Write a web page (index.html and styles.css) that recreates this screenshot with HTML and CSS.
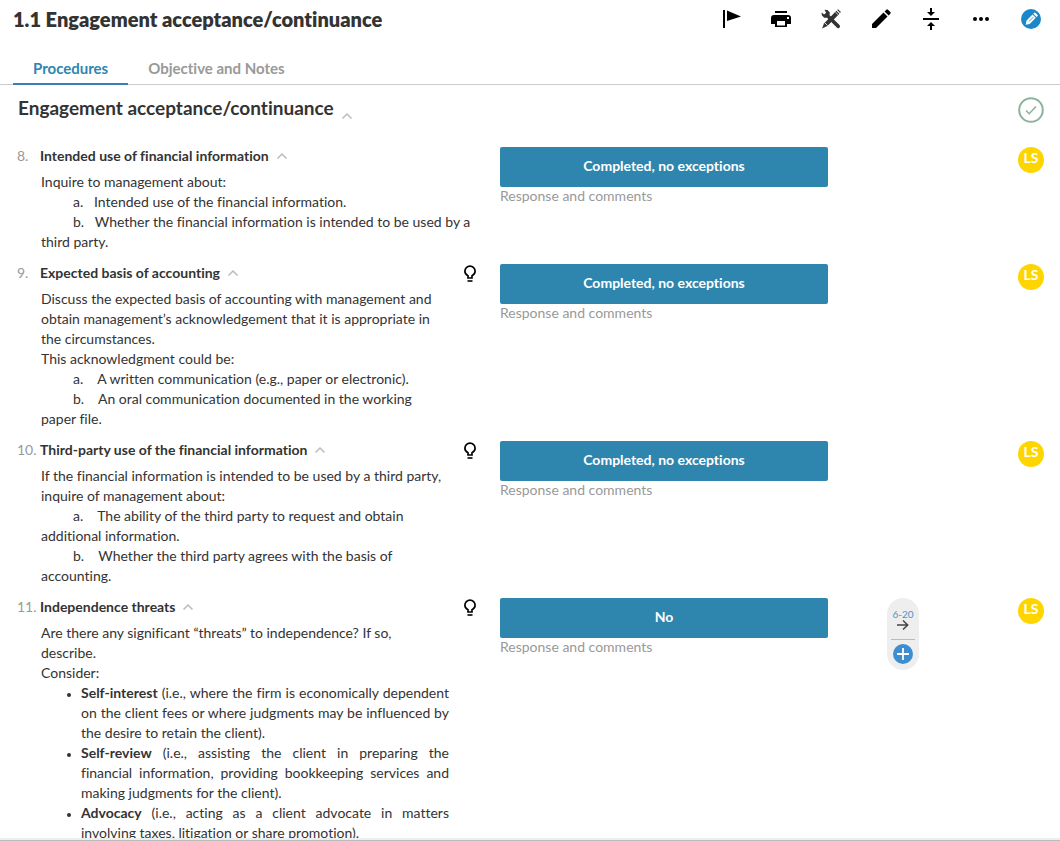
FILE: index.html
```html
<!DOCTYPE html>
<html lang="en">
<head>
<meta charset="utf-8">
<title>1.1 Engagement acceptance/continuance</title>
<link rel="stylesheet" href="styles.css">
</head>
<body>
<svg class="sprite" aria-hidden="true">
  <symbol id="chevron" viewBox="0 0 12 8"><path d="M1.500 6.500 6 2l4.500 4.500" fill="none" stroke="currentColor" stroke-width="1.500"/></symbol>
  <symbol id="bulb" viewBox="0 0 14 18"><path d="M5 13v-2.300C3 9.800 1.900 8.300 1.900 6.300a5.100 5.100 0 0 1 10.200 0c0 2-1.100 3.500-3.100 4.400V13z" fill="none" stroke="currentColor" stroke-width="1.700"/><path d="M4.500 15.200h5v1.600h-5z" fill="currentColor"/></symbol>
</svg>
<div class="app">
  <header class="topbar">
    <h1 class="title">1.1 Engagement acceptance/continuance</h1>
    <div class="tools">
      <button class="tool" aria-label="Flag"><svg viewBox="0 0 20 20"><path d="M2 1h2v18H2z M6 1.500 20 7.500 6 12z"/></svg></button>
      <button class="tool" aria-label="Print"><svg viewBox="0 0 20 20"><path d="M4 2h12v2H4z"/><path fill-rule="evenodd" d="M3 6h14a3 3 0 0 1 3 3v6h-4v3H4v-3H0V9a3 3 0 0 1 3-3zm3 6v4.500h8V12zM16 8v2h2V8z"/></svg></button>
      <button class="tool tool-soft" aria-label="Tools"><svg viewBox="0 0 20 20"><path d="m3.500.8 3 .2 2.300 2.500-.2 2.700 9.900 9.800a1.800 1.800 0 0 1-2.700 2.600L6 8.800l-2.800-.1L.8 6.300.6 3.600l2.500 2 2-1.800z"/><path d="m15.400 1.800 3 2.900-12 12.200L1 19.400l2-5z"/><path d="m16.200.9.8-.7L19.900 3l-.8.900z"/><path d="m3.800 13.800 2.800 2.700M14.300 3l2.900 2.800" stroke="#fff" stroke-width=".8"/></svg></button>
      <button class="tool" aria-label="Edit"><svg viewBox="0 0 20 20"><path d="M1 15 12.500 3.500l4 4L5 19H1zM13.600 2.400l1.700-1.700a1.200 1.200 0 0 1 1.700 0L19.300 3a1.200 1.200 0 0 1 0 1.700l-1.700 1.700z"/></svg></button>
      <button class="tool" aria-label="Collapse all"><svg viewBox="0 0 16 22"><path d="M0 10h16v2H0zM7 0h2v4h3l-4 4-4-4h3zM7 22h2v-4h3l-4-4-4 4h3z"/></svg></button>
      <button class="tool" aria-label="More"><svg viewBox="0 0 20 20"><circle cx="4" cy="10" r="2"/><circle cx="10" cy="10" r="2"/><circle cx="16" cy="10" r="2"/></svg></button>
      <button class="tool" aria-label="Edit mode"><svg viewBox="0 0 20 20"><circle cx="10" cy="10" r="10" fill="#1a87c9"/><path d="m4.700 15.700.7-4 6.100-6.200 3.300 3.300-6.100 6.200zM12.300 4.700l1-1c.3-.3.700-.3 1 0l2.300 2.300c.3.300.3.700 0 1l-1 1z" fill="#fff"/><path d="m8 12.400 4.300-4.300" stroke="#1a87c9" stroke-width=".8"/></svg></button>
    </div>
  </header>

  <nav class="tabs">
    <a class="tab tab-active" href="#procedures" aria-current="page">Procedures</a>
    <a class="tab" href="#notes">Objective and Notes</a>
  </nav>

  <main class="content" id="procedures">
    <div class="section-head">
      <h2 class="section-title">Engagement acceptance/continuance</h2>
      <button class="toggle toggle-low" aria-label="Collapse section"><svg><use href="#chevron"/></svg></button>
      <button class="signoff" aria-label="Sign off"><svg viewBox="0 0 26 26" fill="none" stroke="#8bb39b"><circle cx="13" cy="13" r="11.800" stroke-width="2"/><path d="m8 13.500 3.200 3.200L18 9.500" stroke-width="1.600"/></svg></button>
    </div>

    <article class="row">
      <span class="number">8.</span>
      <div class="question">
        <div class="question-head"><h3 class="question-title">Intended use of financial information</h3><button class="toggle" aria-label="Collapse"><svg><use href="#chevron"/></svg></button></div>
        <div class="text">
          <p>Inquire to management about:</p>
          <p class="step">a.&nbsp;&nbsp; Intended use of the financial information.</p>
          <p class="step">b.&nbsp;&nbsp; Whether the financial information is intended to be used by a third party.</p>
        </div>
      </div>
      <div class="response"><button class="answer">Completed, no exceptions</button><input class="comment" type="text" placeholder="Response and comments" aria-label="Response and comments"></div>
      <div class="side"><span class="avatar">LS</span></div>
    </article>

    <article class="row">
      <span class="number">9.</span>
      <div class="question has-hint">
        <div class="question-head"><h3 class="question-title">Expected basis of accounting</h3><button class="toggle" aria-label="Collapse"><svg><use href="#chevron"/></svg></button></div>
        <button class="hint" aria-label="Guidance"><svg><use href="#bulb"/></svg></button>
        <div class="text">
          <p>Discuss the expected basis of accounting with management and obtain management’s acknowledgement that it is appropriate in the circumstances.</p>
          <p>This acknowledgment could be:</p>
          <p class="step">a.&nbsp;&nbsp;&nbsp; A written communication (e.g., paper or electronic).</p>
          <p class="step">b.&nbsp;&nbsp;&nbsp; An oral communication documented in the working paper file.</p>
        </div>
      </div>
      <div class="response"><button class="answer">Completed, no exceptions</button><input class="comment" type="text" placeholder="Response and comments" aria-label="Response and comments"></div>
      <div class="side"><span class="avatar">LS</span></div>
    </article>

    <article class="row">
      <span class="number">10.</span>
      <div class="question has-hint">
        <div class="question-head"><h3 class="question-title">Third-party use of the financial information</h3><button class="toggle" aria-label="Collapse"><svg><use href="#chevron"/></svg></button></div>
        <button class="hint" aria-label="Guidance"><svg><use href="#bulb"/></svg></button>
        <div class="text">
          <p>If the financial information is intended to be used by a third party, inquire of management about:</p>
          <p class="step">a.&nbsp;&nbsp;&nbsp; The ability of the third party to request and obtain additional information.</p>
          <p class="step">b.&nbsp;&nbsp;&nbsp; Whether the third party agrees with the basis of accounting.</p>
        </div>
      </div>
      <div class="response"><button class="answer">Completed, no exceptions</button><input class="comment" type="text" placeholder="Response and comments" aria-label="Response and comments"></div>
      <div class="side"><span class="avatar">LS</span></div>
    </article>

    <article class="row">
      <span class="number">11.</span>
      <div class="question has-hint">
        <div class="question-head"><h3 class="question-title">Independence threats</h3><button class="toggle" aria-label="Collapse"><svg><use href="#chevron"/></svg></button></div>
        <button class="hint" aria-label="Guidance"><svg><use href="#bulb"/></svg></button>
        <div class="text">
          <p>Are there any significant “threats” to independence? If so, describe.</p>
          <p>Consider:</p>
          <ul class="threats">
            <li><strong>Self-interest</strong> (i.e., where the firm is economically dependent on the client fees or where judgments may be influenced by the desire to retain the client).</li>
            <li><strong>Self-review</strong> (i.e., assisting the client in preparing the financial information, providing bookkeeping services and making judgments for the client).</li>
            <li><strong>Advocacy</strong> (i.e., acting as a client advocate in matters involving taxes, litigation or share promotion).</li>
          </ul>
        </div>
      </div>
      <div class="response"><button class="answer">No</button><input class="comment" type="text" placeholder="Response and comments" aria-label="Response and comments"></div>
      <div class="side">
        <div class="refs">
          <a class="ref" href="#6-20">6-20<svg viewBox="0 0 12 12"><path d="M0 6h10.500M6 1.500 10.700 6 6 10.500" fill="none" stroke="#444" stroke-width="1.500"/></svg></a>
          <button class="add" aria-label="Add reference"><svg viewBox="0 0 20 20"><circle cx="10" cy="10" r="10" fill="#3d8ed0"/><path d="M10 4v12M4 10h12" stroke="#fff" stroke-width="1.800"/></svg></button>
        </div>
        <span class="avatar">LS</span>
      </div>
    </article>
  </main>
</div>
</body>
</html>
```

FILE: styles.css
```css
* { box-sizing: border-box; }

body {
  margin: 0;
  background: #fff;
  color: #333;
  font: 14px/20px Lato, "Open Sans", sans-serif;
  font-variant-ligatures: none;
}

h1, h2, h3, p, ul { margin: 0; }

button {
  padding: 0;
  border: 0;
  background: none;
  color: inherit;
  font: inherit;
  cursor: pointer;
}

svg { display: block; }

.sprite { display: none; }

.app {
  display: flex;
  flex-direction: column;
  height: 100vh;
  border-bottom: 1px solid #bbb;
}

.app::after {
  content: "";
  flex: none;
  height: 2px;
  background: #eee;
}

.topbar {
  display: flex;
  flex: none;
  align-items: center;
  justify-content: space-between;
  height: 38px;
  padding: 0 19px 0 13px;
}

.title {
  font-size: 20px;
  font-weight: 800;
  line-height: 38px;
}

.tools {
  display: flex;
  gap: 30px;
  color: #000;
}

.tool svg {
  width: 20px;
  height: 22px;
  fill: currentColor;
}

.tool-soft { color: #333; }

.tabs {
  display: flex;
  flex: none;
  height: 47px;
  padding: 14px 13px 0;
  border-bottom: 1px solid #ccc;
}

.tab {
  height: 33px;
  padding: 0 20px;
  border-bottom: 2px solid transparent;
  color: #999;
  font-size: 15px;
  font-weight: 700;
  line-height: 33px;
  text-decoration: none;
}

.tab-active {
  border-color: #3a7fb5;
  color: #2e86af;
}

.content {
  flex: 1;
  min-height: 0;
  overflow: hidden;
}

.section-head {
  display: flex;
  align-items: center;
  height: 50px;
  margin-bottom: 12px;
  padding: 0 16px 0 18px;
}

.section-title {
  padding-bottom: 4px;
  font-size: 19px;
  font-weight: 700;
  line-height: 40px;
}

.signoff { margin-left: auto; }

.signoff svg {
  width: 26px;
  height: 26px;
}

.toggle {
  margin-left: 7px;
  color: #bbb;
}

.toggle svg {
  width: 12px;
  height: 8px;
}

.toggle-low { margin-top: 12px; }

.row {
  display: grid;
  grid-template-columns: 23px minmax(0, 460fr) minmax(0, 328fr) minmax(0, 216fr);
  padding: 0 16px 12px 17px;
}

.number {
  color: #999;
  line-height: 18px;
}

.question {
  display: grid;
  grid-template-columns: minmax(0, 1fr);
  grid-template-rows: 18px auto;
  row-gap: 7px;
  padding-right: 23px;
}

.has-hint {
  grid-template-columns: minmax(0, 1fr) 14px;
  column-gap: 14px;
}

.question-head {
  display: flex;
  align-items: center;
}

.question-title {
  font-size: 14px;
  font-weight: 700;
  line-height: 18px;
}

.hint {
  padding-top: 1px;
  color: #000;
}

.hint svg {
  width: 14px;
  height: 18px;
}

.text { padding-left: 1px; }

.step { text-indent: 32px; }

.threats {
  padding-left: 40px;
  list-style: none;
  text-align: justify;
}

.threats li::before {
  content: "";
  float: left;
  width: 4px;
  height: 4px;
  margin: 10px 0 0 -14px;
  border-radius: 50%;
  background: #333;
}

.answer {
  display: block;
  width: 100%;
  height: 40px;
  padding-bottom: 2px;
  border-radius: 2px;
  background: #2e86af;
  color: #fff;
  font-weight: 700;
}

.comment {
  display: block;
  width: 100%;
  height: 18px;
  padding: 0;
  border: 0;
  background: none;
  color: #333;
  font: inherit;
  line-height: 18px;
}

.comment::placeholder { color: #999; }

.side {
  display: flex;
  align-items: flex-start;
  padding-left: 59px;
}

.avatar {
  width: 26px;
  height: 26px;
  margin-left: auto;
  border-radius: 50%;
  background: #ffd500;
  color: #fff;
  font-weight: 700;
  line-height: 21px;
  text-align: center;
}

.refs {
  display: flex;
  flex-direction: column;
  align-items: center;
  width: 32px;
  height: 72px;
  padding: 11px 4px 6px;
  border-radius: 16px;
  background: #eee;
}

.ref {
  display: flex;
  flex-direction: column;
  align-items: center;
  width: 100%;
  height: 31px;
  border-bottom: 1px solid #bbb;
  color: #4a94c8;
  font-size: 10px;
  line-height: 10px;
  text-decoration: none;
}

.ref svg {
  width: 12px;
  height: 12px;
}

.add { margin-top: 4px; }

.add svg {
  width: 20px;
  height: 20px;
}
```
